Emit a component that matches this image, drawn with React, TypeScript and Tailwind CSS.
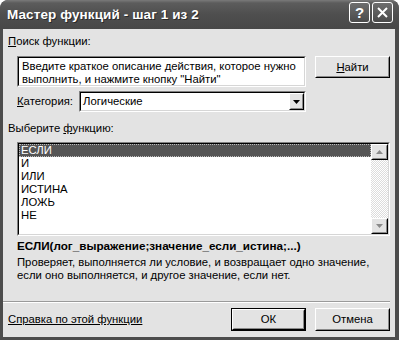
import React from "react";

function Raised({ children, className = "" }: { children?: React.ReactNode; className?: string }) {
  return (
    <div className={"border border-t-white border-l-white border-b-black border-r-black bg-[#e3e3e3] " + className}>
      <div className="w-full h-full border border-t-[#e3e3e3] border-l-[#e3e3e3] border-b-[#8a8a8a] border-r-[#8a8a8a] flex items-center justify-center">
        {children}
      </div>
    </div>
  );
}

function Sunken({ children, className = "" }: { children?: React.ReactNode; className?: string }) {
  return (
    <div className={"border border-t-[#808080] border-l-[#808080] border-b-white border-r-white " + className}>
      <div className="w-full h-full border border-t-black border-l-black border-b-[#d6d6d6] border-r-[#d6d6d6] bg-white flex">
        {children}
      </div>
    </div>
  );
}

function Arrow({ dir, color }: { dir: "up" | "down"; color: string }) {
  return (
    <svg width="7" height="4" viewBox="0 0 7 4">
      {dir === "up" ? <polygon points="3.5,0 7,4 0,4" fill={color} /> : <polygon points="0,0 7,0 3.5,4" fill={color} />}
    </svg>
  );
}

export default function App() {
  const items = ["И", "ИЛИ", "ИСТИНА", "ЛОЖЬ", "НЕ"];
  return (
    <div className="w-[399px] h-[340px] bg-[#4c4c4c] rounded-t-[8px] flex flex-col overflow-hidden [font-family:'Liberation_Sans',Arial,sans-serif] text-[11.3px] text-black">
      {/* title bar */}
      <div className="h-[29px] shrink-0 rounded-t-[8px] bg-[linear-gradient(#7a7a7a_0px,#5c5c5c_3px,#4f4f4f_14px,#474747_29px)] flex items-center pl-[7px] pr-[6px]">
        <div className="flex-1 text-white font-bold text-[13.5px] leading-[13px] tracking-[0.1px] [text-shadow:1px_1px_0_#2a2a2a]">
          Мастер функций - шаг 1 из 2
        </div>
        <div className="flex gap-[2px] -mt-[4px]">
          <div className="w-[21px] h-[21px] rounded-[3px] border border-white bg-[linear-gradient(#6e6e6e,#4a4a4a)] flex items-center justify-center text-white font-bold text-[15px] leading-none">
            ?
          </div>
          <div className="w-[21px] h-[21px] rounded-[3px] border border-white bg-[linear-gradient(#6e6e6e,#4a4a4a)] flex items-center justify-center">
            <svg width="11" height="11" viewBox="0 0 11 11">
              <path d="M1 1 L10 10 M10 1 L1 10" stroke="white" strokeWidth="2" />
            </svg>
          </div>
        </div>
      </div>
      {/* body */}
      <div className="flex-1 ml-[3px] mr-[4px] mb-[3px] bg-[#e3e3e3] flex flex-col">
        <div className="mt-[6px] ml-[5px] h-[13px] leading-[13px]">
          <span className="underline">П</span>оиск функции:
        </div>
        <div className="mt-[8px] flex items-start">
          <Sunken className="ml-[14px] w-[289px] h-[31px]">
            <div className="pl-[3px] pt-[2px] leading-[13px]">
              Введите краткое описание действия, которое нужно
              <br />
              выполнить, и нажмите кнопку "Найти"
            </div>
          </Sunken>
          <Raised className="ml-[9px] w-[75px] h-[22px]">
            <span>
              <span className="underline">Н</span>айти
            </span>
          </Raised>
        </div>
        <div className="mt-[4px] flex items-center h-[21px]">
          <div className="ml-[14px] w-[62px]">
            <span className="underline">К</span>атегория:
          </div>
          <Sunken className="w-[227px] h-[21px]">
            <div className="flex-1 pl-[2px] flex items-center">Логические</div>
            <Raised className="w-[15px] h-[17px]">
              <Arrow dir="down" color="#000" />
            </Raised>
          </Sunken>
        </div>
        <div className="mt-[10px] ml-[5px] h-[13px] leading-[13px]">
          Выберите <span className="underline">ф</span>ункцию:
        </div>
        <Sunken className="mt-[7px] ml-[14px] w-[373px] h-[94px]">
          <div className="flex-1 flex flex-col">
            <div className="h-[13px] leading-[13px] bg-[#555555] text-white pl-[2px] outline outline-1 outline-dotted outline-[#bbbbbb] -outline-offset-1">
              ЕСЛИ
            </div>
            {items.map((t) => (
              <div key={t} className="h-[13px] leading-[13px] pl-[2px]">
                {t}
              </div>
            ))}
          </div>
          <div className="w-[17px] flex flex-col bg-[repeating-conic-gradient(#ffffff_0_25%,#dcdcdc_0_50%)] bg-[length:2px_2px]">
            <Raised className="w-[17px] h-[16px]">
              <Arrow dir="up" color="#8a8a8a" />
            </Raised>
            <div className="flex-1" />
            <Raised className="w-[17px] h-[16px]">
              <Arrow dir="down" color="#8a8a8a" />
            </Raised>
          </div>
        </Sunken>
        <div className="mt-[3px] ml-[14px] h-[14px] leading-[14px] font-bold text-[11.7px]">
          ЕСЛИ(лог_выражение;значение_если_истина;...)
        </div>
        <div className="mt-[3px] ml-[14px] leading-[13px]">
          Проверяет, выполняется ли условие, и возвращает одно значение,
          <br />
          если оно выполняется, и другое значение, если нет.
        </div>
        <div className="mt-auto mr-[5px] border-t border-t-[#9a9a9a] border-b border-b-white" />
        <div className="h-[34px] flex items-center pr-[5px] pb-[1px]">
          <div className="ml-[5px] flex-1 underline leading-[13px]">Справка по этой функции</div>
          <div className="border border-black">
            <Raised className="w-[73px] h-[21px]">ОК</Raised>
          </div>
          <Raised className="ml-[9px] w-[75px] h-[23px]">Отмена</Raised>
        </div>
      </div>
    </div>
  );
}
